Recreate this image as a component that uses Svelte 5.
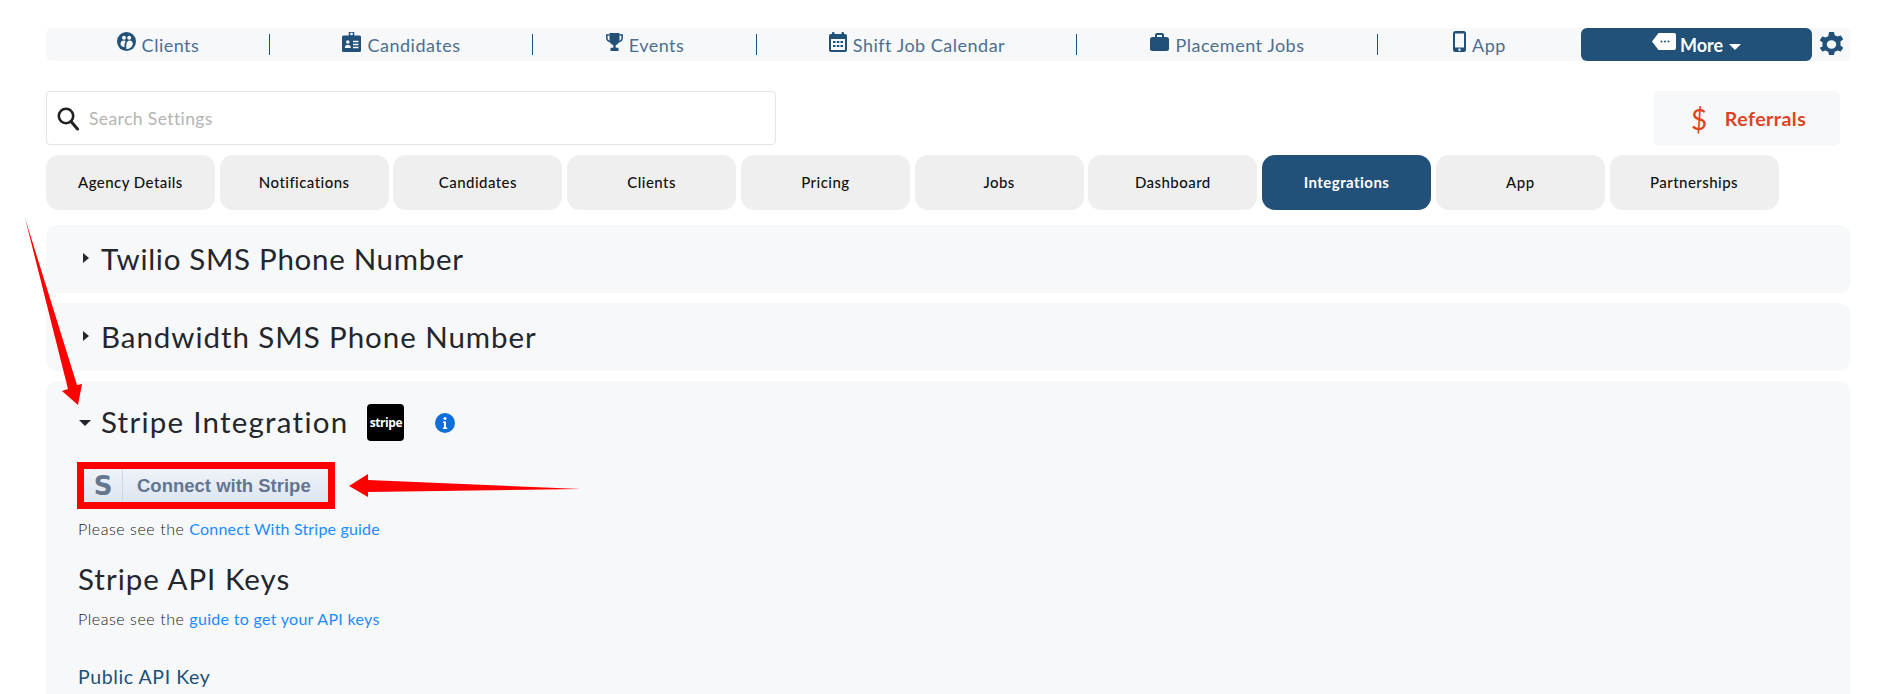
<script>
  const tabs = ['Agency Details','Notifications','Candidates','Clients','Pricing','Jobs','Dashboard','Integrations','App','Partnerships'];
</script>

<div class="page">
  <nav class="nav">
    <a class="item">
      <svg class="ic" width="19" height="19" viewBox="0 0 19 19"><circle cx="9.5" cy="9.5" r="9.5" fill="#215078"/><circle cx="7" cy="5.800" r="2" fill="#f7f8fa"/><circle cx="12.200" cy="5.800" r="2" fill="#f7f8fa"/><path d="M3.500 12c0-2.300 1.300-3.500 3.200-3.500.9 0 1.500.3 2 .8-.8 1-1.200 2.200-1.200 3.700v2.300C5.300 14.700 3.500 13.800 3.500 12zM15.800 11.800c0-2.100-1.300-3.300-3-3.300-1.900 0-3.500 1.500-3.500 4.500v4.300c3.300-.4 6.500-2.500 6.500-5.500z" fill="#f7f8fa"/></svg>
      <span>Clients</span>
    </a>
    <a class="item">
      <svg class="ic" width="19" height="20" viewBox="0 0 19 20"><path d="M7.500 0h4v4H7.500z" fill="none" stroke="#215078" stroke-width="1.500"/><rect x="0" y="3.500" width="19" height="16.500" rx="1.500" fill="#215078"/><circle cx="5.800" cy="10" r="1.800" fill="#f7f8fa"/><path d="M2.800 16c0-2.200 1.200-3.300 3-3.300s3 1.100 3 3.300z" fill="#f7f8fa"/><path d="M11 9.500h5.500M11 12.500h5.500M11 15.500h5.500" stroke="#f7f8fa" stroke-width="1.400"/></svg>
      <span>Candidates</span>
    </a>
    <a class="item">
      <svg class="ic" width="17" height="18" viewBox="0 0 17 18"><path d="M3.500 0h10v7c0 2.800-2 4.600-3.800 5v2.800h2.800V18h-8v-3.200h2.800V12C5.500 11.600 3.500 9.800 3.500 7z" fill="#215078"/><path d="M3.500 2H.8v2.500c0 2.200 1.500 3.800 3.400 4.200M13.500 2h2.700v2.500c0 2.200-1.500 3.800-3.400 4.200" fill="none" stroke="#215078" stroke-width="1.500"/></svg>
      <span>Events</span>
    </a>
    <a class="item">
      <svg class="ic" width="18" height="20" viewBox="0 0 18 20"><rect x="3" y="0" width="2.500" height="4" rx="1" fill="#215078"/><rect x="12.500" y="0" width="2.500" height="4" rx="1" fill="#215078"/><rect x="0" y="2" width="18" height="18" rx="2" fill="#215078"/><rect x="2" y="7" width="14" height="11" fill="#f7f8fa"/><path d="M4 9h2.500v2H4zM7.800 9h2.500v2H7.800zM11.500 9H14v2h-2.500zM4 13h2.500v2H4zM7.800 13h2.500v2H7.800zM11.500 13H14v2h-2.500z" fill="#215078"/></svg>
      <span>Shift Job Calendar</span>
    </a>
    <a class="item">
      <svg class="ic" width="19" height="18" viewBox="0 0 19 18"><path d="M6 4.500V2a1 1 0 0 1 1-1h5a1 1 0 0 1 1 1v2.500" fill="none" stroke="#215078" stroke-width="2"/><rect x="0" y="4" width="19" height="14" rx="2.500" fill="#215078"/></svg>
      <span>Placement Jobs</span>
    </a>
    <a class="item last">
      <svg class="ic" width="13" height="21" viewBox="0 0 13 21"><rect x="0" y="0" width="13" height="21" rx="2.500" fill="#215078"/><rect x="2" y="2.500" width="9" height="14" fill="#f7f8fa"/><circle cx="6.500" cy="18.700" r="1.200" fill="#f7f8fa"/></svg>
      <span>App</span>
    </a>
    <a class="more">
      <svg class="tag" width="24" height="17" viewBox="0 0 24 17"><path d="M6.500 0H22a2 2 0 0 1 2 2v13a2 2 0 0 1-2 2H6.500L0 8.500z" fill="#fff"/><circle cx="9.500" cy="8.500" r="1" fill="#215078"/><circle cx="13" cy="8.500" r="1" fill="#215078"/><circle cx="16.500" cy="8.500" r="1" fill="#215078"/></svg>
      <span>More</span>
      <i class="more-caret"></i>
    </a>
    <div class="gear-wrap">
      <svg width="25" height="25" viewBox="1.500 0 21 24" preserveAspectRatio="none"><path fill="#215078" fill-rule="evenodd" d="M9.900 0h4.200l.6 3.100c.8.300 1.500.700 2.100 1.200l3-1 2.100 3.600-2.400 2.100c.1.800.1 1.200.1 2s0 1.200-.1 2l2.400 2.100-2.100 3.600-3-1c-.6.500-1.300.9-2.100 1.200l-.6 3.100H9.900l-.6-3.100c-.8-.3-1.500-.7-2.100-1.200l-3 1-2.100-3.600L4.500 14c-.1-.8-.1-1.200-.1-2s0-1.200.1-2L2.100 7.900l2.100-3.600 3 1c.6-.5 1.300-.9 2.100-1.200zM12 8a4 4 0 1 0 0 8 4 4 0 0 0 0-8z"/></svg>
    </div>
  </nav>

  <div class="search-row">
    <label class="search">
      <svg width="24" height="25" viewBox="0 0 24 25"><circle cx="10" cy="10" r="7.200" fill="none" stroke="#222" stroke-width="2.600"/><path d="M15 15.500l6.500 7.500" stroke="#222" stroke-width="3" stroke-linecap="round"/></svg>
      <input placeholder="Search Settings" />
    </label>
    <a class="referrals"><span class="dollar">$</span><span>Referrals</span></a>
  </div>

  <div class="tabs">
    {#each tabs as t}
      <button class:active={t === 'Integrations'}>{t}</button>
    {/each}
  </div>

  <section class="acc">
    <h2><i class="caret-right"></i>Twilio SMS Phone Number</h2>
  </section>
  <section class="acc">
    <h2 class="bw"><i class="caret-right"></i>Bandwidth SMS Phone Number</h2>
  </section>
  <section class="acc open">
    <div class="acc-head">
      <i class="caret-down"></i>
      <h2 class="plain">Stripe Integration</h2>
      <span class="stripe-logo">stripe</span>
      <svg class="info" width="20" height="20" viewBox="0 0 20 20"><circle cx="10" cy="10" r="10" fill="#0f6fd8"/><circle cx="10" cy="5.600" r="1.500" fill="#fff"/><path d="M8 8.500h3v6h1.200v1.500H7.900v-1.500H9V10H8z" fill="#fff"/></svg>
    </div>
    <div class="connect-frame">
      <div class="connect">
        <span class="s">S</span>
        <span class="ct">Connect with Stripe</span>
      </div>
    </div>
    <p class="p1">Please see the <a>Connect With Stripe guide</a></p>
    <h3>Stripe API Keys</h3>
    <p class="p2">Please see the <a>guide to get your API keys</a></p>
    <h4>Public API Key</h4>
  </section>

  <svg class="arrows" width="600" height="300" viewBox="0 0 600 300">
    <polygon fill="#ff0000" points="25,18 77,185 82,184 78,205 62,191 68,189"/>
    <polygon fill="#ff0000" points="581,289 368,280 368,274 349,286 368,297 368,292"/>
  </svg>
</div>

<style>
  :global(body) { margin: 0; background: #fff; }
  .page {
    position: relative;
    box-sizing: border-box;
    height: 694px;
    overflow: hidden;
    padding: 28px 38px 0 46px;
    font-family: Lato, "Open Sans", sans-serif;
  }
  a { text-decoration: none; cursor: pointer; }

  .nav {
    display: grid;
    grid-template-columns: 224px 263px 224px 320px 301px 203px 231px 1fr;
    height: 33px;
    background: #f7f8fa;
    border-radius: 6px;
  }
  .item {
    display: flex;
    align-items: center;
    justify-content: center;
    gap: 6px;
    position: relative;
    color: #4c6f90;
    font-size: 18px;
    font-weight: 400;
    letter-spacing: 0.5px;
  }
  .item .ic { position: relative; top: -3px; }
  .item:not(.last)::after {
    content: '';
    position: absolute;
    right: 0;
    top: 6px;
    height: 21px;
    width: 1px;
    background: #215078;
  }
  .more {
    display: flex;
    align-items: center;
    justify-content: center;
    gap: 4px;
    background: #215078;
    color: #fff;
    border-radius: 6px;
    font-size: 18px;
    font-weight: 700;
  }
  .tag { position: relative; top: -3px; }
  .more-caret {
    width: 0; height: 0;
    margin-left: 2px;
    margin-top: 4px;
    border-left: 6px solid transparent;
    border-right: 6px solid transparent;
    border-top: 6px solid #fff;
  }
  .gear-wrap { display: flex; align-items: center; justify-content: center; }
  .gear-wrap svg { display: block; }

  .search-row {
    display: flex;
    justify-content: space-between;
    margin-top: 30px;
    padding-right: 11px;
  }
  .search {
    display: flex;
    align-items: center;
    box-sizing: border-box;
    width: 730px;
    height: 54px;
    gap: 9px;
    padding-left: 9px;
    border: 1px solid #e4e4e4;
    border-radius: 4px;
    background: #fff;
  }
  .search svg { flex: none; }
  .search input {
    flex: 1;
    border: 0;
    outline: 0;
    background: transparent;
    font: 400 17.500px Lato, sans-serif;
    letter-spacing: 0.4px;
    padding: 0;
  }
  .search input::placeholder { color: #b4b4b4; opacity: 1; }
  .referrals {
    box-sizing: border-box;
    width: 187px;
    height: 55px;
    display: flex;
    align-items: center;
    gap: 17px;
    padding-left: 38px;
    background: #f7f8fa;
    border-radius: 6px;
    color: #e0431f;
    font-size: 19.500px;
    font-weight: 700;
    letter-spacing: 0.5px;
  }
  .dollar { font-size: 28px; font-weight: 400; line-height: 1; }

  .tabs {
    display: flex;
    gap: 4.850px;
    margin-top: 9px;
  }
  .tabs button {
    width: 168.900px;
    height: 55px;
    border: 0;
    padding: 0 0 2px;
    background: #efefef;
    border-radius: 13px;
    color: #111;
    font: 500 15px Lato, sans-serif;
    letter-spacing: 0.45px;
  }
  .tabs button.active { background: #215078; color: #fff; font-weight: 700; }

  .acc {
    background: #f7f8fa;
    border-radius: 12px;
    margin-bottom: 10px;
    color: #23272d;
  }
  .tabs + .acc { margin-top: 15px; }
  h2 {
    position: relative;
    margin: 0;
    box-sizing: border-box;
    height: 68px;
    display: flex;
    align-items: center;
    padding: 0 0 2px 55px;
    font-size: 29.500px;
    font-weight: 400;
    letter-spacing: 0.7px;
  }
  h2.bw { letter-spacing: 0.95px; }
  .caret-right {
    position: absolute;
    left: 37px;
    top: 28px;
    width: 0; height: 0;
    border-top: 5px solid transparent;
    border-bottom: 5px solid transparent;
    border-left: 6px solid #23272d;
  }
  .open {
    height: 400px;
    padding: 23px 0 0 32px;
  }
  .acc-head { display: flex; align-items: center; height: 37px; }
  .caret-down {
    width: 0; height: 0;
    margin-left: 1px;
    border-left: 6px solid transparent;
    border-right: 6px solid transparent;
    border-top: 6px solid #23272d;
  }
  h2.plain { height: auto; padding: 0 0 2px; margin-left: 10px; letter-spacing: 1.25px; }
  .stripe-logo {
    box-sizing: border-box;
    width: 37px;
    height: 37px;
    margin-left: 19px;
    border-radius: 4px;
    background: #000;
    color: #fff;
    display: flex;
    align-items: center;
    justify-content: center;
    font: 700 12px "Open Sans", sans-serif;
    letter-spacing: -0.4px;
  }
  .info { margin-left: 31px; }
  .connect-frame {
    box-sizing: border-box;
    width: 258px;
    height: 47px;
    margin-top: 21px;
    border: 7.500px solid #ff0000;
    margin-left: -1px;
  }
  .connect {
    height: 100%;
    display: flex;
    align-items: center;
    background: linear-gradient(#eff3f9, #dde5f0);
  }
  .s {
    box-sizing: border-box;
    width: 39px;
    height: 100%;
    display: flex;
    align-items: center;
    justify-content: center;
    border-right: 1px solid #cdd6e3;
    font: 700 26px "DejaVu Sans", sans-serif;
    color: #65778f;
  }
  .ct {
    margin-left: 14px;
    font: 700 18.500px "Liberation Sans", sans-serif;
    color: #64758f;
  }
  p {
    margin: 0;
    font-size: 16px;
    font-weight: 300;
    line-height: 20px;
    color: #222;
    letter-spacing: 0.55px;
  }
  p a { color: #1a8cff; font-weight: 400; letter-spacing: 0.18px; }
  .p2 a { letter-spacing: 0.3px; }
  .p1 { margin-top: 10px; }
  h3 {
    margin: 20px 0 0;
    font-size: 29.500px;
    line-height: 40px;
    font-weight: 400;
    color: #23272d;
    letter-spacing: 1px;
  }
  .p2 { margin-top: 10px; }
  h4 {
    margin: 36px 0 0;
    font-size: 19.500px;
    line-height: 24px;
    font-weight: 400;
    color: #215078;
    letter-spacing: 0.6px;
  }
  .arrows {
    position: absolute;
    left: 0;
    top: 200px;
    pointer-events: none;
  }
</style>
